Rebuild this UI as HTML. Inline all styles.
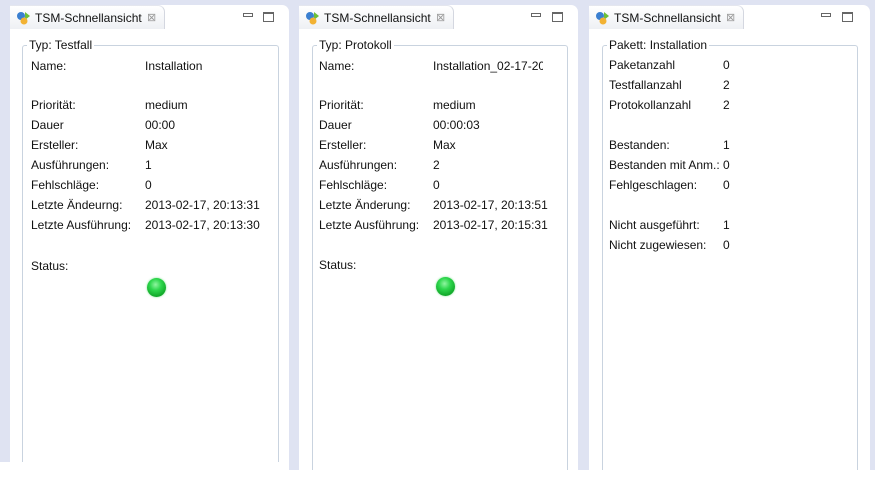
<!DOCTYPE html>
<html><head><meta charset="utf-8"><style>
*{margin:0;padding:0;box-sizing:border-box}
body{width:875px;height:478px;background:#fff;position:relative;overflow:hidden;font-family:"Liberation Sans",sans-serif;font-size:12px;color:#000}
.bg{position:absolute;left:0;top:0;width:875px;background:#dfe3f2}
.panel{position:absolute;top:5px;background:#fff;border-radius:0 7px 0 0}
.tab{position:absolute;top:0;left:0;height:24px;border-radius:0 7px 0 0;background:linear-gradient(#fff,#eef0f4);border-right:1px solid #d4d7e0;border-top:1px solid #e4e6ee}
.tab .t{position:absolute;left:25px;top:5px;font-size:12px;color:#111}
.tab .x{position:absolute;top:5px;color:#999;font-size:11px}
.ic{position:absolute;left:6px;top:5px;width:16px;height:14px}
.min{position:absolute;top:8px;width:10px;height:4px;border:1px solid #666}
.max{position:absolute;top:7px;width:11px;height:10px;border:1px solid #666;border-top-width:2px}
.fs{position:absolute;top:40px;border:1px solid #c9d3df;border-bottom:none;border-radius:3px 3px 0 0}
.lg{position:absolute;top:33px;background:#fff;padding:0 2px;color:#111}
.r{position:absolute;white-space:nowrap;color:#111}
.dot{position:absolute;width:19px;height:19px;border-radius:50%;background:radial-gradient(circle at 45% 35%,#8ff5a0 0,#2ed74d 35%,#0c9f22 80%,#0a7a1a 100%);box-shadow:0 0 2px #7fe58f}
</style></head><body>
<div class="bg" style="height:462px"></div>
<div class="bg" style="left:289px;width:586px;height:470px"></div>

<!-- Panel 1 -->
<div class="panel" style="left:10px;width:279px;height:473px">
 <div class="tab" style="width:155px">
  <svg class="ic" viewBox="0 0 16 14"><circle cx="5" cy="5" r="4" fill="#3a7fd0"/><path d="M9 1 L14 5 L9 9Z" fill="#6cbf3a"/><circle cx="8" cy="10" r="3.5" fill="#f2b233"/></svg>
  <span class="t">TSM-Schnellansicht</span><span class="x" style="left:137px">⊠</span>
 </div>
 <div class="min" style="left:233px"></div><div class="max" style="left:253px"></div>
 <div class="fs" style="left:12px;width:257px;height:417px"></div>
 <div class="lg" style="left:17px">Typ: Testfall</div>
</div>
<div class="r" style="left:31px;top:59px">Name:</div><div class="r" style="left:145px;top:59px">Installation</div>
<div class="r" style="left:31px;top:98px">Priorität:</div><div class="r" style="left:145px;top:98px">medium</div>
<div class="r" style="left:31px;top:118px">Dauer</div><div class="r" style="left:145px;top:118px">00:00</div>
<div class="r" style="left:31px;top:138px">Ersteller:</div><div class="r" style="left:145px;top:138px">Max</div>
<div class="r" style="left:31px;top:158px">Ausführungen:</div><div class="r" style="left:145px;top:158px">1</div>
<div class="r" style="left:31px;top:178px">Fehlschläge:</div><div class="r" style="left:145px;top:178px">0</div>
<div class="r" style="left:31px;top:198px">Letzte Ändeurng:</div><div class="r" style="left:145px;top:198px">2013-02-17, 20:13:31</div>
<div class="r" style="left:31px;top:218px">Letzte Ausführung:</div><div class="r" style="left:145px;top:218px">2013-02-17, 20:13:30</div>
<div class="r" style="left:31px;top:259px">Status:</div>
<div class="dot" style="left:147px;top:278px"></div>

<!-- Panel 2 -->
<div class="panel" style="left:299px;width:279px;height:473px">
 <div class="tab" style="width:155px">
  <svg class="ic" viewBox="0 0 16 14"><circle cx="5" cy="5" r="4" fill="#3a7fd0"/><path d="M9 1 L14 5 L9 9Z" fill="#6cbf3a"/><circle cx="8" cy="10" r="3.5" fill="#f2b233"/></svg>
  <span class="t">TSM-Schnellansicht</span><span class="x" style="left:137px">⊠</span>
 </div>
 <div class="min" style="left:232px"></div><div class="max" style="left:253px"></div>
 <div class="fs" style="left:13px;width:256px;height:425px"></div>
 <div class="lg" style="left:18px">Typ: Protokoll</div>
</div>
<div class="r" style="left:319px;top:59px">Name:</div><div class="r" style="left:433px;top:59px;width:110px;overflow:hidden">Installation_02-17-2013</div>
<div class="r" style="left:319px;top:98px">Priorität:</div><div class="r" style="left:433px;top:98px">medium</div>
<div class="r" style="left:319px;top:118px">Dauer</div><div class="r" style="left:433px;top:118px">00:00:03</div>
<div class="r" style="left:319px;top:138px">Ersteller:</div><div class="r" style="left:433px;top:138px">Max</div>
<div class="r" style="left:319px;top:158px">Ausführungen:</div><div class="r" style="left:433px;top:158px">2</div>
<div class="r" style="left:319px;top:178px">Fehlschläge:</div><div class="r" style="left:433px;top:178px">0</div>
<div class="r" style="left:319px;top:198px">Letzte Änderung:</div><div class="r" style="left:433px;top:198px">2013-02-17, 20:13:51</div>
<div class="r" style="left:319px;top:218px">Letzte Ausführung:</div><div class="r" style="left:433px;top:218px">2013-02-17, 20:15:31</div>
<div class="r" style="left:319px;top:258px">Status:</div>
<div class="dot" style="left:436px;top:277px"></div>

<!-- Panel 3 -->
<div class="panel" style="left:589px;width:281px;height:473px">
 <div class="tab" style="width:155px">
  <svg class="ic" viewBox="0 0 16 14"><circle cx="5" cy="5" r="4" fill="#3a7fd0"/><path d="M9 1 L14 5 L9 9Z" fill="#6cbf3a"/><circle cx="8" cy="10" r="3.5" fill="#f2b233"/></svg>
  <span class="t">TSM-Schnellansicht</span><span class="x" style="left:137px">⊠</span>
 </div>
 <div class="min" style="left:232px"></div><div class="max" style="left:253px"></div>
 <div class="fs" style="left:13px;width:256px;height:425px"></div>
 <div class="lg" style="left:18px">Pakett: Installation</div>
</div>
<div class="r" style="left:609px;top:58px">Paketanzahl</div><div class="r" style="left:723px;top:58px">0</div>
<div class="r" style="left:609px;top:78px">Testfallanzahl</div><div class="r" style="left:723px;top:78px">2</div>
<div class="r" style="left:609px;top:98px">Protokollanzahl</div><div class="r" style="left:723px;top:98px">2</div>
<div class="r" style="left:609px;top:138px">Bestanden:</div><div class="r" style="left:723px;top:138px">1</div>
<div class="r" style="left:609px;top:158px">Bestanden mit Anm.:</div><div class="r" style="left:723px;top:158px">0</div>
<div class="r" style="left:609px;top:178px">Fehlgeschlagen:</div><div class="r" style="left:723px;top:178px">0</div>
<div class="r" style="left:609px;top:218px">Nicht ausgeführt:</div><div class="r" style="left:723px;top:218px">1</div>
<div class="r" style="left:609px;top:238px">Nicht zugewiesen:</div><div class="r" style="left:723px;top:238px">0</div>
</body></html>
